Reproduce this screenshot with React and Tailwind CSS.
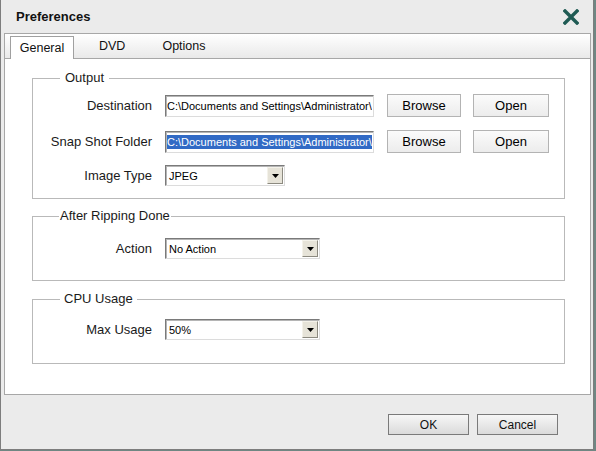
import React from 'react';

const PATH = 'C:\\Documents and Settings\\Administrator\\My Documents';

const Field = ({ value, selected }) => (
    <div className="w-[209px] h-[22px] flex items-center bg-white border border-t-[#7a7a7a] border-l-[#7a7a7a] border-r-[#dcdcdc] border-b-[#dcdcdc] shadow-[inset_1px_1px_0_#b5b5b5] pl-[1px] pr-[1px] overflow-hidden">
        <span className={`block w-full overflow-hidden whitespace-nowrap text-[11px] leading-[14px] ${selected ? 'bg-[#316ac5] text-white' : 'text-black'}`}>
            {value}
        </span>
    </div>
);

const Btn = ({ children, w }) => (
    <button className={`${w} h-[23px] text-[13px] text-black bg-gradient-to-b from-[#fbfbfb] to-[#ececec] border border-[#b3b3b3] flex items-center justify-center`}>
        {children}
    </button>
);

const Combo = ({ value, w }) => (
    <div className={`${w} h-[21px] flex items-center bg-white border border-t-[#7a7a7a] border-l-[#7a7a7a] border-r-[#dcdcdc] border-b-[#dcdcdc] shadow-[inset_1px_1px_0_#b5b5b5]`}>
        <span className="flex-1 pl-[3px] text-[11px] leading-[14px] text-black whitespace-nowrap">{value}</span>
        <div className="w-[16px] h-[17px] mr-[1px] bg-[#e6e3d8] border border-t-[#f4f2ea] border-l-[#f4f2ea] border-r-[#8c8a80] border-b-[#8c8a80] flex items-center justify-center">
            <svg width="7" height="4" viewBox="0 0 7 4">
                <path d="M0 0 H7 L3.5 4 Z" fill="#000" />
            </svg>
        </div>
    </div>
);

const Row = ({ label, children, className = '' }) => (
    <div className={`flex items-center h-[23px] ${className}`}>
        <div className="w-[119px] text-right text-[13px] text-[#1a1a1a] leading-[16px]">{label}</div>
        <div className="ml-[13px] flex items-center">{children}</div>
    </div>
);

const Group = ({ title, legendClass, className = '', children }) => (
    <fieldset className={`ml-[27px] mr-[25px] border border-[#b9b9b9] ${className}`}>
        <legend className={`text-[13px] leading-[14px] text-[#1a1a1a] ${legendClass}`}>{title}</legend>
        {children}
    </fieldset>
);

export default function App() {
    return (
        <div className="w-[596px] h-[451px] flex bg-[#6f8783] font-['Liberation_Sans',Arial,sans-serif]">
            <div className="w-[594px] h-[450px] flex flex-col bg-[#ebebeb] border border-t-0 border-[#7d7d7d]">
                {/* Title */}
                <div className="h-[33px] flex items-center justify-between pl-[15px] pr-[14px]">
                    <span className="text-[13px] font-bold text-[#111]">Preferences</span>
                    <svg width="16" height="16" viewBox="0 0 16 16">
                        <path d="M2 2 L14 14 M14 2 L2 14" stroke="#1f5b54" strokeWidth="3.4" strokeLinecap="square" />
                    </svg>
                </div>

                {/* Tabs */}
                <div className="ml-[3px] mr-[2px] h-[26px] flex items-end pl-[5px] border border-[#a7a7a7] bg-gradient-to-b from-white to-[#e9e9e9]">
                    <div className="h-[23px] mb-[-1px] w-[64px] bg-white border border-b-0 border-[#a0a0a0] flex items-center justify-center text-[12.5px] text-[#111]">
                        General
                    </div>
                    <div className="h-[23px] ml-[25px] flex items-center text-[12.5px] text-[#111]">DVD</div>
                    <div className="h-[23px] ml-[37px] flex items-center text-[12.5px] text-[#111]">Options</div>
                </div>

                {/* Panel */}
                <div className="ml-[3px] mr-[2px] h-[336px] bg-white border border-t-0 border-[#a7a7a7] pt-[12px]">
                    <Group title="Output" legendClass="ml-[27px] px-[5px]">
                        <div className="pt-[9px] pb-[11px]">
                            <Row label="Destination">
                                <Field value={PATH} />
                                <div className="ml-[13px]"><Btn w="w-[74px]">Browse</Btn></div>
                                <div className="ml-[12px]"><Btn w="w-[76px]">Open</Btn></div>
                            </Row>
                            <Row label="Snap Shot Folder" className="mt-[13px]">
                                <Field value={PATH} selected />
                                <div className="ml-[13px]"><Btn w="w-[74px]">Browse</Btn></div>
                                <div className="ml-[12px]"><Btn w="w-[76px]">Open</Btn></div>
                            </Row>
                            <Row label="Image Type" className="mt-[11px]">
                                <Combo value="JPEG" w="w-[120px]" />
                            </Row>
                        </div>
                    </Group>

                    <Group title="After Ripping Done" legendClass="ml-[26px] px-[1px]" className="mt-[10px]">
                        <div className="pt-[14px] pb-[20px]">
                            <Row label="Action">
                                <Combo value="No Action" w="w-[155px]" />
                            </Row>
                        </div>
                    </Group>

                    <Group title="CPU Usage" legendClass="ml-[27px] px-[4px]" className="mt-[11px]">
                        <div className="pt-[12px] pb-[22px]">
                            <Row label="Max Usage">
                                <Combo value="50%" w="w-[155px]" />
                            </Row>
                        </div>
                    </Group>
                </div>

                {/* Footer */}
                <div className="flex-1 flex items-start justify-end pt-[19px] pr-[35px] gap-[8px]">
                    <button className="w-[81px] h-[21px] text-[12px] text-[#111] bg-gradient-to-b from-[#f7f7f7] to-[#dadada] border border-[#7a7a7a] flex items-center justify-center">
                        OK
                    </button>
                    <button className="w-[81px] h-[21px] text-[12px] text-[#111] bg-gradient-to-b from-[#f7f7f7] to-[#dadada] border border-[#7a7a7a] flex items-center justify-center">
                        Cancel
                    </button>
                </div>
            </div>
        </div>
    );
}
